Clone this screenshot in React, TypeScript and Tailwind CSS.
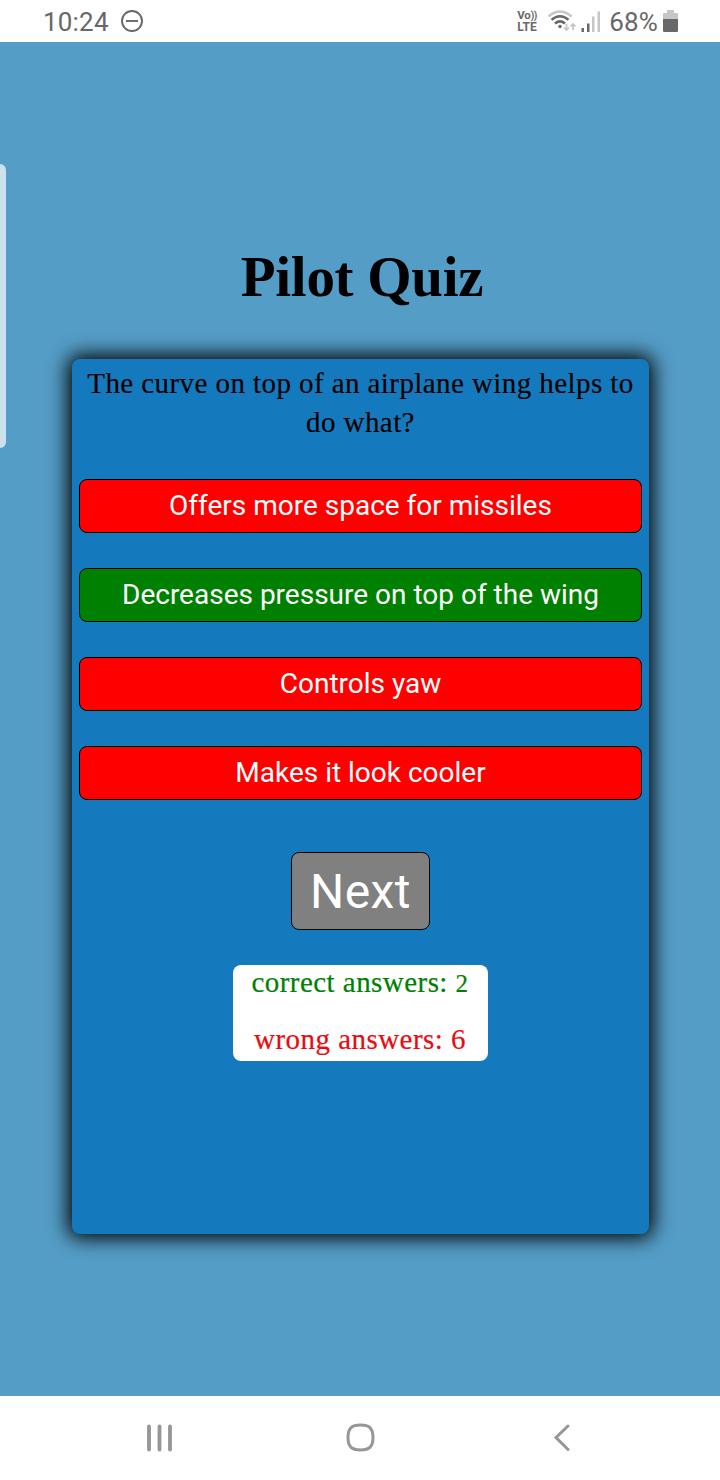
type Answer = { text: string; correct: boolean };

const answers: Answer[] = [
  { text: "Offers more space for missiles", correct: false },
  { text: "Decreases pressure on top of the wing", correct: true },
  { text: "Controls yaw", correct: false },
  { text: "Makes it look cooler", correct: false },
];

function StatusBar() {
  return (
    <header className="flex h-[42px] shrink-0 items-center justify-between bg-white pl-[43px] pr-[42px] pt-[2px] font-[Roboto,sans-serif] text-[#686868]">
      <div className="flex items-center gap-[11px]">
        <span className="text-[26px] leading-none tracking-[0.2px]">10:24</span>
        <svg className="-mt-[2px] h-6 w-6" viewBox="0 0 24 24" fill="none" stroke="#686868" strokeWidth="1.9">
          <circle cx="12" cy="12" r="10" />
          <path d="M6 12h12" />
        </svg>
      </div>
      <div className="flex items-center">
        <div className="-mt-[2px] mr-[9px] flex w-[22px] flex-col text-[12px] font-bold">
          <span className="h-[12px] whitespace-nowrap text-[11.500px] leading-[12px] tracking-[-0.1px]">
            Vo<span className="text-[10px] tracking-[-0.4px]">))</span>
          </span>
          <span className="h-[12px] leading-[12px] tracking-[0.1px]">LTE</span>
        </div>
        <svg className="mr-[4px] h-[24px] w-[29px]" viewBox="0 0 29 24" fill="none" strokeLinecap="butt">
          <path d="M.5 6.500Q12 -3.500 23.500 6.500" stroke="#c6c6c6" strokeWidth="2.4" />
          <path d="M3.500 9.800Q12 2.600 20.500 9.800" stroke="#686868" strokeWidth="2.5" />
          <path d="M7 13.500Q12 9.300 17 13.500" stroke="#686868" strokeWidth="2.5" />
          <circle cx="12" cy="16.500" r="1.700" fill="#686868" />
          <path d="M18.500 14v6.500M16 17.500l2.500 2.500 2.500-2.500M25 20v-6.500M22.500 16.500l2.500-2.500 2.500 2.500" stroke="#c6c6c6" strokeWidth="1.7" />
        </svg>
        <svg className="mr-[9px] h-[22px] w-[19px]" viewBox="0 0 19 22">
          <path d="M0.500 17h2.500v4H.5zM6 12.500h2.500V21H6z" fill="#686868" />
          <path d="M11 5.500h2.500V21H11zM16.500 .5H19V21h-2.500z" fill="#c6c6c6" />
        </svg>
        <span className="mr-[5px] text-[26px] leading-none tracking-[0.2px]">68%</span>
        <svg className="-mt-[2px] h-[22px] w-[15px]" viewBox="0 0 15 22">
          <path d="M4 0h7v3h3a1 1 0 0 1 1 1v6H0V4a1 1 0 0 1 1-1h3z" fill="#c6c6c6" />
          <path d="M0 9h15v12a1 1 0 0 1-1 1H1a1 1 0 0 1-1-1z" fill="#686868" />
        </svg>
      </div>
    </header>
  );
}

function NavigationBar() {
  return (
    <nav className="flex h-[84px] shrink-0 items-center justify-between bg-white pl-[144px] pr-[147px]">
      <svg className="h-8 w-8" viewBox="0 0 32 32" stroke="#969696" strokeWidth="3.8" strokeLinecap="round">
        <path d="M5 4.500v23M15.500 4.500v23M26 4.500v23" />
      </svg>
      <svg className="ml-[3px] h-8 w-8" viewBox="0 0 32 32" fill="none" stroke="#969696" strokeWidth="3">
        <path d="M16.500 3C25.500 3 29 6.500 29 15.500S25.500 28 16.500 28 4 24.500 4 15.500 7.500 3 16.500 3Z" />
      </svg>
      <svg className="h-8 w-8" viewBox="0 0 32 32" fill="none" stroke="#969696" strokeWidth="3" strokeLinecap="round">
        <path d="M27 4L15 15.500l12 12" />
      </svg>
    </nav>
  );
}

export default function App() {
  return (
    <div className="relative flex h-[1480px] w-[720px] flex-col overflow-hidden bg-[#549dc7] font-['Liberation_Serif',serif] text-black">
      <StatusBar />
      <div className="absolute left-0 top-[164px] h-[284px] w-[6px] rounded-r-[6px] bg-[#cbe1ed]" />
      <main className="flex flex-1 flex-col items-center">
        <h1 className="mt-[203px] h-[114px] pl-[4px] text-[57px] font-bold leading-[64px] tracking-[-0.3px]">Pilot Quiz</h1>
        <section className="flex h-[875px] w-[577px] flex-col items-center rounded-[8px] bg-[#147abd] px-[7px] pt-[5px] shadow-[0_0_20px_4px_#000]">
          <p className="h-[115px] whitespace-nowrap pl-[1px] text-center text-[29px] leading-[39px] tracking-[0.42px] [-webkit-text-stroke:0.15px_#000]">
            The curve on top of an airplane wing helps to
            <br />
            do what?
          </p>
          <div className="flex w-full flex-col gap-[35px]">
            {answers.map((answer) => (
              <button
                key={answer.text}
                className={`h-[54px] w-full rounded-[8px] border border-black pl-[1px] font-[Roboto,sans-serif] text-[28px] leading-none text-white ${answer.correct ? "bg-[#008000]" : "bg-[#ff0000]"}`}
              >
                {answer.text}
              </button>
            ))}
          </div>
          <button className="mt-[52px] h-[78px] w-[139px] rounded-[8px] border border-black bg-[#808080] pl-[1px] pt-[2px] font-[Roboto,sans-serif] text-[48px] leading-none tracking-[0.4px] text-white">
            Next
          </button>
          <div className="mt-[35px] flex h-[96px] w-[255px] flex-col items-center gap-[18px] whitespace-nowrap rounded-[8px] bg-white text-[29px] leading-[39px] tracking-[0.45px]">
            <p className="-mt-[2px] h-[39px] text-[#008000] [-webkit-text-stroke:0.2px_#008000]">
              correct answers: <span className="text-[25px]">2</span>
            </p>
            <p className="h-[39px] text-[#eb0a10] [-webkit-text-stroke:0.2px_#eb0a10]">wrong answers: 6</p>
          </div>
        </section>
      </main>
      <NavigationBar />
    </div>
  );
}
